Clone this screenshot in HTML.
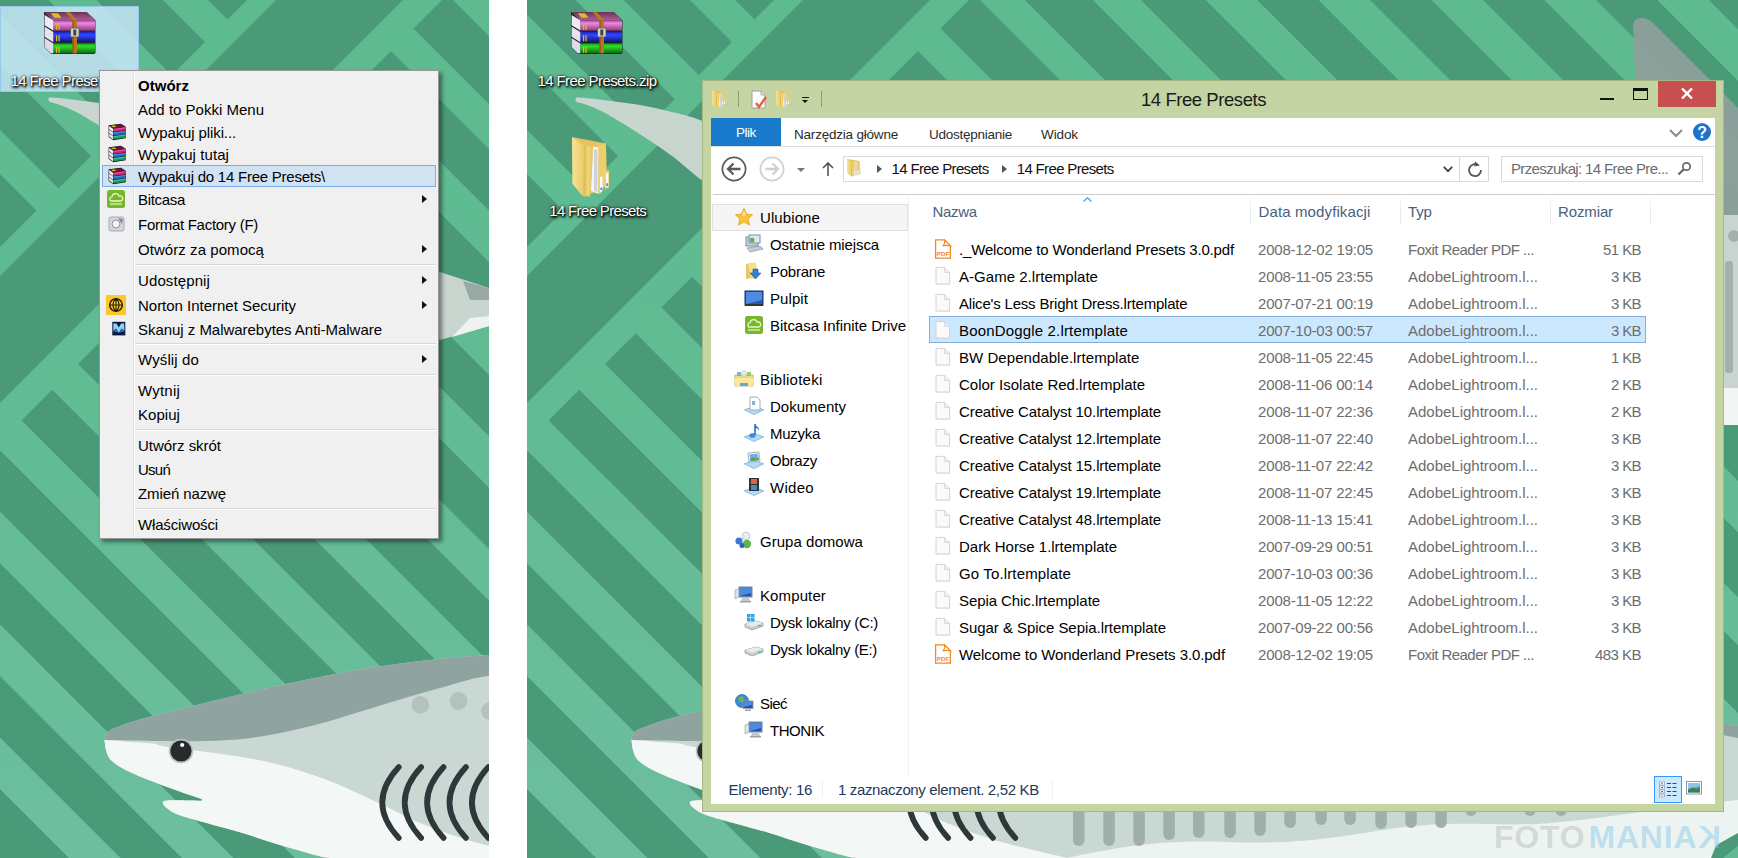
<!DOCTYPE html><html><head><meta charset="utf-8"><title>14 Free Presets</title><style>
*{box-sizing:border-box}
html,body{margin:0;padding:0}
body{width:1738px;height:858px;background:#fff;position:relative;overflow:hidden;font-family:"Liberation Sans", "DejaVu Sans", sans-serif;font-size:15px;color:#000}
.abs{position:absolute}
.panel{position:absolute;top:0;height:858px;overflow:hidden}
.t{position:absolute;white-space:pre;line-height:20px;height:20px}
.dl{position:absolute;white-space:pre;color:#fff;font-size:15px;line-height:20px;text-align:center;text-shadow:1px 1px 2px #000,0 0 3px #000,1px 2px 3px rgba(0,0,0,.8)}
#menu{position:absolute;left:99px;top:70px;width:340px;height:469px;background:#f0f0f0;border:1px solid #979797;box-shadow:3px 3px 4px rgba(0,0,0,.45)}
#menu .gut{position:absolute;left:33px;top:2px;bottom:2px;width:2px;border-left:1px solid #e0e0e0;border-right:1px solid #fff}
#menu .sep{position:absolute;left:35px;right:2px;height:2px;border-top:1px solid #d7d7d7;border-bottom:1px solid #fff}
#menu .mi{position:absolute;left:38px;white-space:pre;line-height:20px;height:20px}
#menu .arr{position:absolute;left:322.300px;width:0;height:0;border-left:5px solid #111;border-top:4.200px solid transparent;border-bottom:4.200px solid transparent}
#win{position:absolute;left:175px;top:80px;width:1022px;height:732px;background:#c4d5a3;border:1px solid #a5b884}
#client{position:absolute;left:8px;top:37px;width:1004px;height:685px;background:#fff}
.navi{color:#000}
.hd{color:#4c607a}
.gr{color:#6d6d6d}
</style></head><body>
<svg width="0" height="0" style="position:absolute"><defs><g id="wall"><rect x="0" y="0" width="1211" height="858" fill="#4a9a79"/><linearGradient id="lg" gradientUnits="userSpaceOnUse" x1="0" y1="0" x2="0" y2="858"><stop offset="0" stop-color="#5dbb8f"/><stop offset=".45" stop-color="#61bb93"/><stop offset="1" stop-color="#6cbe9f"/></linearGradient><g fill="url(#lg)"><polygon points="-174.5,614.5 -148.75,588.75 781.25,1518.75 755.5,1544.5"/><polygon points="-118.05,558.05 -92.3,532.3 837.7,1462.3 811.95,1488.05"/><polygon points="-61.6,501.6 -35.85,475.85 894.15,1405.85 868.4,1431.6"/><polygon points="-5.15,445.15 20.6,419.4 950.6,1349.4 924.85,1375.15"/><polygon points="51.3,388.7 77.05,362.95 1007.05,1292.95 981.3,1318.7"/><polygon points="107.75,332.25 133.5,306.5 1063.5,1236.5 1037.75,1262.25"/><polygon points="164.2,275.8 189.95,250.05 1119.95,1180.05 1094.2,1205.8"/><polygon points="220.65,219.35 246.4,193.6 1176.4,1123.6 1150.65,1149.35"/><polygon points="277.1,162.9 302.85,137.15 1232.85,1067.15 1207.1,1092.9"/><polygon points="333.55,106.45 359.3,80.7 1289.3,1010.7 1263.55,1036.45"/><polygon points="390,50 412.5,27.5 1342.5,957.5 1320,980"/><polygon points="446.45,-6.45 468.95,-28.95 1398.95,901.05 1376.45,923.55"/><polygon points="502.9,-62.9 526.9,-86.9 1456.9,843.1 1432.9,867.1"/><polygon points="559.35,-119.35 585.1,-145.1 1515.1,784.9 1489.35,810.65"/><polygon points="615.8,-175.8 641.55,-201.55 1571.55,728.45 1545.8,754.2"/><polygon points="672.25,-232.25 698,-258 1628,672 1602.25,697.75"/><polygon points="728.7,-288.7 754.45,-314.45 1684.45,615.55 1658.7,641.3"/><polygon points="785.15,-345.15 810.9,-370.9 1740.9,559.1 1715.15,584.85"/><polygon points="841.6,-401.6 867.35,-427.35 1797.35,502.65 1771.6,528.4"/><polygon points="-98.5,501.5 501.5,-98.5 521,-79 -79,521"/><polygon points="-76.5,323.5 323.5,-76.5 338,-62 -62,338"/><polygon points="-42,132 -20,110 60,190 38,212"/><polygon points="-37.5,27.5 -12.25,2.25 117.75,132.25 92.5,157.5"/><polygon points="39.25,-9.25 63.25,-33.25 173.25,76.75 149.25,100.75"/><polygon points="141.5,-21.5 164,-44 229,21 206.5,43.5"/></g><path fill="#cbd7d1" fill-opacity=".97" d="M48.5,99.5 C49.1,99.2 46.8,97.4 52.0,97.6 C57.2,97.8 69.4,99.2 80.0,100.5 C90.6,101.8 104.8,103.6 115.6,105.5 C126.4,107.4 134.9,109.4 145.0,112.0 C155.1,114.6 158.5,114.7 176.0,121.0 C193.5,127.3 222.7,136.0 250.0,150.0 C277.3,164.0 308.3,184.7 340.0,205.0 C371.7,225.3 423.3,260.8 440.0,272.0 L489,288 L489,326 L440,340  C423.3,331.7 371.7,307.5 340.0,290.0 C308.3,272.5 277.3,253.2 250.0,235.0 C222.7,216.8 193.5,194.2 176.0,181.0 C158.5,167.8 155.1,163.5 145.0,156.0 C134.9,148.5 126.4,143.0 115.6,136.0 C104.8,129.0 89.3,119.2 80.0,114.0 C70.7,108.8 65.0,107.0 60.0,105.0 C55.0,103.0 51.9,102.9 50.0,102.0 C48.1,101.1 48.8,99.9 48.5,99.5 Z"/><path fill="#98a8a4" d="M463,281 L489,288 L489,300 L470,300Z"/><path fill="#eef3f1" d="M452,337 L470,318 L489,316 L489,326 Z"/><path fill="#8d9f9b" fill-opacity=".95" d="M1106,24 Q1108,17 1116,18 Q1122,19 1126,23 L1211,108 L1211,215 L1110,215 C1112,150 1108,80 1106,24Z"/><rect x="1190" y="215" width="30" height="173" fill="#c9d4cf"/><rect x="1198" y="261" width="8" height="112" rx="3" fill="#a3b1ac"/><circle cx="1207" cy="236" r="6" fill="#a3b1ac"/><rect x="1190" y="388" width="30" height="37" fill="#f1f5f4"/><path fill="#c9d8d2" d="M104.5,740.0 C104.8,739.0 104.8,735.8 106.0,734.0 C107.2,732.2 109.3,730.8 111.5,729.5 C113.7,728.2 114.3,728.2 119.4,726.4 C124.5,724.6 133.0,721.4 142.3,718.8 C151.6,716.1 163.2,713.5 175.3,710.5 C187.4,707.5 199.6,704.2 215.0,700.5 C230.4,696.8 250.5,691.9 268.0,688.0 C285.5,684.1 303.1,680.3 320.0,677.0 C336.9,673.7 351.2,670.8 369.5,668.0 C387.8,665.2 409.9,662.2 430.0,660.0 C450.1,657.8 461.7,656.8 490.0,655.0 C518.3,653.2 556.7,649.7 600.0,649.0 C643.3,648.3 700.0,648.0 750.0,651.0 C800.0,654.0 850.0,659.8 900.0,667.0 C950.0,674.2 998.2,684.2 1050.0,694.0 C1101.8,703.8 1184.2,720.7 1211.0,726.0 L1211,858 L330,858  C328.1,857.7 327.0,858.2 318.7,856.0 C310.4,853.8 292.7,848.8 280.0,845.0 C267.3,841.2 254.2,836.5 242.5,833.0 C230.8,829.5 220.6,827.0 210.0,824.0 C199.4,821.0 186.0,817.5 179.0,815.0 C172.0,812.5 170.7,810.9 168.0,809.0 C165.3,807.1 163.0,804.9 163.0,803.5 C163.0,802.1 161.5,801.0 168.0,800.5 C174.5,800.0 196.2,800.8 201.8,800.8 L201.8,799  C196.5,797.2 180.1,791.7 170.0,788.0 C159.9,784.3 149.0,780.3 141.0,777.0 C133.0,773.7 127.1,770.9 122.0,768.0 C116.9,765.1 113.0,762.4 110.3,759.4 C107.6,756.4 107.0,753.2 106.0,750.0 C105.0,746.8 104.8,741.7 104.5,740.0 Z"/><path fill="#8fa3a0" d="M104.5,740.0 C104.8,739.0 104.8,735.8 106.0,734.0 C107.2,732.2 109.3,730.8 111.5,729.5 C113.7,728.2 114.3,728.2 119.4,726.4 C124.5,724.6 133.0,721.4 142.3,718.8 C151.6,716.1 163.2,713.5 175.3,710.5 C187.4,707.5 199.6,704.2 215.0,700.5 C230.4,696.8 250.5,691.9 268.0,688.0 C285.5,684.1 303.1,680.3 320.0,677.0 C336.9,673.7 351.2,670.8 369.5,668.0 C387.8,665.2 409.9,662.2 430.0,660.0 C450.1,657.8 461.7,656.8 490.0,655.0 C518.3,653.2 556.7,649.7 600.0,649.0 C643.3,648.3 700.0,648.0 750.0,651.0 C800.0,654.0 850.0,659.8 900.0,667.0 C950.0,674.2 998.2,684.2 1050.0,694.0 C1101.8,703.8 1184.2,720.7 1211.0,726.0 L1211,738  C1184.2,732.7 1101.8,715.7 1050.0,706.0 C998.2,696.3 950.0,687.0 900.0,680.0 C850.0,673.0 800.0,667.0 750.0,664.0 C700.0,661.0 643.3,660.1 600.0,662.0 C556.7,663.9 516.7,671.3 490.0,675.6 C463.3,679.9 455.8,683.8 440.0,688.0 C424.2,692.2 409.0,696.8 395.0,701.0 C381.0,705.2 368.7,709.2 356.0,713.0 C343.3,716.8 331.4,720.7 318.7,724.0 C306.0,727.3 292.7,730.5 280.0,733.0 C267.3,735.5 255.0,737.7 242.5,739.0 C230.0,740.3 218.8,740.7 205.0,741.0 C191.2,741.3 176.8,741.2 160.0,741.0 C143.2,740.8 113.8,740.2 104.5,740.0 Z"/><path fill="#f3f7f6" d="M104.5,740.0 C104.8,741.7 105.0,746.8 106.0,750.0 C107.0,753.2 107.6,756.4 110.3,759.4 C113.0,762.4 116.9,765.1 122.0,768.0 C127.1,770.9 133.0,773.7 141.0,777.0 C149.0,780.3 159.9,784.3 170.0,788.0 C180.1,791.7 196.5,797.2 201.8,799.0 L201.8,800.8  C196.2,800.8 174.5,800.0 168.0,800.5 C161.5,801.0 163.0,802.1 163.0,803.5 C163.0,804.9 165.3,807.1 168.0,809.0 C170.7,810.9 172.0,812.5 179.0,815.0 C186.0,817.5 199.4,821.0 210.0,824.0 C220.6,827.0 230.8,829.5 242.5,833.0 C254.2,836.5 267.3,841.2 280.0,845.0 C292.7,848.8 310.4,853.8 318.7,856.0 C327.0,858.2 328.1,857.7 330.0,858.0 L540,858  C528.5,855.2 491.0,846.8 471.0,841.0 C451.0,835.2 434.7,829.0 420.0,823.0 C405.3,817.0 395.7,811.0 383.0,805.0 C370.3,799.0 356.2,792.2 344.0,787.0 C331.8,781.8 322.7,778.2 310.0,774.0 C297.3,769.8 283.8,765.5 268.0,762.0 C252.2,758.5 232.0,755.5 215.0,753.0 C198.0,750.5 176.4,748.3 166.0,746.7 C155.6,745.1 159.0,744.4 152.5,743.6 C146.0,742.8 133.8,742.2 127.0,741.7 C120.2,741.2 114.5,740.8 112.0,740.6 L104.5,740 Z"/><path fill="#edf3f1" d="M540,858 C600,845 640,840 700,842 C780,845 820,835 870,828 C930,820 960,826 1010,824 C1070,820 1100,812 1211,800 L1211,858Z"/><circle cx="181" cy="751" r="12.3" fill="#b7c6c2"/><circle cx="181" cy="751" r="10.6" fill="#272b2c"/><circle cx="182.200" cy="745" r="2.100" fill="#fff"/><path d="M398.8,767 q-33,35.500 0,71" fill="none" stroke="#2e383a" stroke-width="5.600" stroke-linecap="round"/><path d="M421.2,767 q-33,35.500 0,71" fill="none" stroke="#2e383a" stroke-width="5.600" stroke-linecap="round"/><path d="M443.6,767 q-33,35.500 0,71" fill="none" stroke="#2e383a" stroke-width="5.600" stroke-linecap="round"/><path d="M466,767 q-33,35.500 0,71" fill="none" stroke="#2e383a" stroke-width="5.600" stroke-linecap="round"/><path d="M488.4,767 q-33,35.500 0,71" fill="none" stroke="#2e383a" stroke-width="5.600" stroke-linecap="round"/><circle cx="420.4" cy="704.8" r="8.900" fill="#b3c2bc"/><circle cx="458.5" cy="701" r="8.900" fill="#b3c2bc"/><circle cx="490" cy="711" r="8.900" fill="#b3c2bc"/><rect x="546" y="700" width="11.500" height="146" rx="5.700" fill="#9fb0aa"/><rect x="576.3" y="700" width="11.500" height="146" rx="5.700" fill="#9fb0aa"/><rect x="606.3" y="700" width="11.500" height="146" rx="5.700" fill="#9fb0aa"/><rect x="636.3" y="700" width="11.500" height="140" rx="5.700" fill="#9fb0aa"/><rect x="666" y="700" width="11.500" height="138" rx="5.700" fill="#9fb0aa"/><rect x="697.3" y="700" width="11.500" height="138" rx="5.700" fill="#9fb0aa"/><rect x="727.3" y="700" width="11.500" height="136" rx="5.700" fill="#9fb0aa"/><rect x="757.3" y="700" width="11.500" height="128" rx="5.700" fill="#9fb0aa"/><rect x="788.3" y="700" width="11.500" height="125" rx="5.700" fill="#9fb0aa"/><rect x="817.3" y="700" width="11.500" height="125" rx="5.700" fill="#9fb0aa"/><rect x="848.3" y="700" width="11.500" height="129" rx="5.700" fill="#9fb0aa"/><rect x="878.3" y="700" width="11.500" height="128" rx="5.700" fill="#9fb0aa"/><rect x="908.3" y="700" width="11.500" height="128" rx="5.700" fill="#9fb0aa"/><rect x="938.3" y="700" width="11.500" height="116" rx="5.700" fill="#9fb0aa"/><rect x="968.3" y="700" width="11.500" height="112" rx="5.700" fill="#9fb0aa"/><rect x="997.3" y="700" width="11.500" height="116" rx="5.700" fill="#9fb0aa"/><rect x="1028.3" y="700" width="11.500" height="116" rx="5.700" fill="#9fb0aa"/><rect x="1058.3" y="700" width="11.500" height="112" rx="5.700" fill="#9fb0aa"/><path fill="#4a9a79" d="M1184,858 L1188,848 Q1189,845 1193,843 L1211,833 L1211,858Z"/><path fill="#64b995" d="M1196,858 L1211,846 L1211,858Z"/></g>
<linearGradient id="gm" x1="0" y1="0" x2="0" y2="1"><stop offset="0" stop-color="#b0509c"/><stop offset=".3" stop-color="#ee86e0"/><stop offset="1" stop-color="#8e3a7c"/></linearGradient>
<linearGradient id="gb" x1="0" y1="0" x2="0" y2="1"><stop offset="0" stop-color="#1a22b8"/><stop offset=".3" stop-color="#3448ff"/><stop offset="1" stop-color="#0c1478"/></linearGradient>
<linearGradient id="gg" x1="0" y1="0" x2="0" y2="1"><stop offset="0" stop-color="#12a012"/><stop offset=".3" stop-color="#2edc2e"/><stop offset="1" stop-color="#0c6a10"/></linearGradient>
<linearGradient id="gt" x1="0" y1="0" x2="0" y2="1"><stop offset="0" stop-color="#6a3452"/><stop offset="1" stop-color="#b05a9c"/></linearGradient>
<g id="rar">
<path d="M0,0 L42.600,0 L51.500,8.300 L51.500,41 L50,42 L7,42 L0.300,35 Z" fill="#15121a" opacity=".88"/>
<path d="M0,0 L42.600,0 L51,8.300 L9.300,8.300 Z" fill="url(#gt)"/>
<path d="M6.700,1.300 L14,1.300 L17.500,5.800 L10.500,5.800 Z" fill="#d8c020"/>
<path d="M21.500,0.300 L26,0.300 L33,8.300 L28.500,8.300 Z" fill="#b47a1c"/>
<rect x="9.300" y="8.300" width="41.700" height="10.300" fill="url(#gm)"/>
<rect x="9.300" y="19.900" width="41.700" height="10.300" fill="url(#gb)"/>
<rect x="9.300" y="31.400" width="41.700" height="9.800" fill="url(#gg)"/>
<path d="M0.600,3 L9.300,8.300 L9.300,18.600 L0.600,13.300 Z" fill="#eeeaf6"/>
<path d="M0.600,14.500 L9.300,19.900 L9.300,30.200 L0.600,24.800 Z" fill="#e6e2f0"/>
<path d="M0.600,26 L9.300,31.400 L9.300,41.200 L6.700,41.200 L0.600,35 Z" fill="#dedaea"/>
<g fill="#d8b820"><rect x="11.900" y="11.800" width="1.300" height="6"/><rect x="14.400" y="11.800" width="1.300" height="6"/><rect x="11.900" y="23.400" width="1.300" height="6"/><rect x="14.400" y="23.400" width="1.300" height="6"/><rect x="11.900" y="34.900" width="1.300" height="6"/><rect x="14.400" y="34.900" width="1.300" height="6"/></g>
<rect x="28.500" y="8.300" width="4.500" height="33" fill="#b8761a"/><rect x="28.500" y="8.300" width="1.200" height="33" fill="#8a5410"/>
<rect x="26.600" y="16" width="8.400" height="9" rx="1" fill="#d4d4d4" stroke="#555" stroke-width=".8"/><rect x="29.300" y="17.500" width="3" height="6" fill="#444"/>
</g>
<g id="rars">
<path d="M2.600,3.300 L15,1.700 L19.700,4.800 L19.700,16.300 L7.300,18.300 L2.600,15 Z" fill="#1a1418"/>
<path d="M3.100,3.600 L15,2.200 L19.200,5 L7.300,6.700 Z" fill="#6c1438"/><path d="M5,3.800 L8.500,3.400 L10.500,4.700 L7,5.200 Z" fill="#d8c020"/>
<path d="M7.300,6.900 L19.200,5.200 L19.200,8.300 L7.300,10 Z" fill="#cc2474"/><path d="M7.300,6.900 L19.200,5.200 L19.200,6.300 L7.300,8 Z" fill="#e85aa6"/>
<path d="M3.100,3.900 L7,6.800 L7,10 L3.100,7.100 Z" fill="#f4f2f6"/>
<path d="M7.300,10.600 L19.200,8.900 L19.200,12 L7.300,13.700 Z" fill="#2264c4"/><path d="M7.300,10.600 L19.200,8.900 L19.200,10 L7.300,11.700 Z" fill="#4a90e6"/>
<path d="M3.100,7.600 L7,10.500 L7,13.700 L3.100,10.800 Z" fill="#eceaf0"/>
<path d="M7.300,14.300 L19.200,12.600 L19.200,15.800 L7.300,17.600 Z" fill="#1a9858"/><path d="M7.300,14.300 L19.200,12.600 L19.200,13.700 L7.300,15.400 Z" fill="#3cc488"/>
<path d="M3.100,11.300 L7,14.200 L7,17.500 L3.100,14.600 Z" fill="#e4e2ea"/>
</g>
<g id="bitc"><rect x="1" y="1" width="18" height="18" rx="2.5" fill="#76b82a"/><path d="M5 12a2.3 2.3 0 0 1 1-4.3a3.6 3.6 0 0 1 7-.6a2.6 2.6 0 0 1 2 4.9z" fill="none" stroke="#e8f5d0" stroke-width="1.3"/><path d="M4 15h12" stroke="#e8f5d0" stroke-width="1.2"/></g>
<g id="ff"><rect x="3" y="3" width="15" height="14" rx="2" fill="#d4d6da" stroke="#a9acb3"/><circle cx="10" cy="10" r="4" fill="#f4f4f6" stroke="#8e95a3"/><path d="M12 4l5 1l-1 5z" fill="#7d8aa5"/></g>
<g id="norton"><rect x="0" y="0" width="20" height="20" fill="#fdc82f"/><circle cx="10" cy="10" r="6.3" fill="none" stroke="#2b2200" stroke-width="1.5"/><path d="M3.7 10h12.6M10 3.7v12.6M10 3.7c-4 3-4 9.6 0 12.6M10 3.7c4 3 4 9.6 0 12.6" fill="none" stroke="#2b2200" stroke-width="1.1"/></g>
<g id="mbam"><rect x="6.300" y="2.800" width="13" height="13.600" fill="#0c1a45"/><path d="M7.300,4.500 L10.500,4.500 L12.800,8.500 L15.100,4.500 L18.300,4.500 L18.300,12 L15.500,9.500 L12.800,14 L10.100,9.500 L7.300,12 Z" fill="#8fd0f5"/><path d="M7.300,12.500l3-2.500l1.500,3.500zM18.300,12.500l-3-2.500l-1.500,3.500z" fill="#2b6fd0"/></g>
<g id="tfolder"><path d="M1 3l7-1.5l1 15.5l-8 1z" fill="#e8c864"/><path d="M3 2.5l9-1.5l3 16l-8 2z" fill="#f6e08c"/><path d="M8 4l6-1l2 14l-8 2z" fill="#efd377"/><path d="M9 5l6 0l1 13l-7 1z" fill="#f9e9a4"/></g>
<g id="tdoc"><path d="M2 1h9l4 4v13h-13z" fill="#fdfdfd" stroke="#9a9a9a" stroke-width=".9"/><path d="M11 1v4h4" fill="#e8e8e8" stroke="#9a9a9a" stroke-width=".8"/><path d="M6 13l3 4l7-10" fill="none" stroke="#e8603c" stroke-width="2.4"/></g>
<g id="back"><circle cx="13" cy="13" r="11.6" fill="#fff" stroke="#5a5a5a" stroke-width="1.7"/><path d="M19.5 13h-12M12.5 7.5l-5.5 5.5l5.5 5.5" fill="none" stroke="#5a5a5a" stroke-width="2.3"/></g>
<g id="fwd"><circle cx="13" cy="13" r="11.6" fill="#fff" stroke="#cfcfcf" stroke-width="1.7"/><path d="M6.5 13h12M13.5 7.5l5.5 5.5l-5.5 5.5" fill="none" stroke="#cfcfcf" stroke-width="2.3"/></g>
<g id="star"><path d="M10 1.5l2.6 5.6l6 .7l-4.5 4.1l1.3 6.1l-5.4-3.1l-5.4 3.1l1.3-6.1l-4.5-4.1l6-.7z" fill="#f9c537" stroke="#e39a17" stroke-width=".8"/><path d="M10 3.5l1.8 4.3l-3.8 1z" fill="#fdeaa0"/></g>
<g id="recent"><rect x="2" y="3" width="12" height="9" fill="#b8d4ec" stroke="#7a8fa5"/><rect x="5" y="1" width="11" height="8" fill="#dbeaf7" stroke="#7a8fa5"/><path d="M3 14l13-2l3 3l-13 3z" fill="#c6ccd2" stroke="#8d949b" stroke-width=".7"/><circle cx="8" cy="6" r="2.5" fill="#6fae4f"/></g>
<g id="dl"><path d="M2 3l6-1l1 15l-7 1z" fill="#e8c864"/><path d="M4 2.5l8-1l2 15l-7 2z" fill="#f6e08c"/><path d="M9 8h5v4h3l-5.5 6l-5.500-6h3z" fill="#2d7fd8" stroke="#1b5fb0" stroke-width=".6"/></g>
<g id="desk"><rect x="1" y="3" width="18" height="14" fill="#2a57b8" stroke="#1a2d66"/><path d="M2 4h16v8l-16 4z" fill="#4f8be0"/><rect x="1" y="16" width="18" height="2" fill="#333"/></g>
<g id="lib"><path d="M1 6h18v11h-18z" fill="#f3d774" stroke="#d1a93a" stroke-width=".8"/><path d="M3 3h4v4h-4z" fill="#6fb4e8"/><path d="M8 2h4v5h-4z" fill="#e9e9e9" stroke="#bbb" stroke-width=".5"/><path d="M13 3h4v4h-4z" fill="#8ccf6f"/><path d="M1 9h18v8h-18z" fill="#f9e79f"/><rect x="6" y="14" width="8" height="3" fill="#5fa8e0"/></g>
<g id="docs"><path d="M0.300 13.800l9.700-3.300l9.700 3.300l-9.700 4.700z" fill="#b5dcf5" stroke="#6fb0e0" stroke-width=".8"/><path d="M6 1h7l3 3v10h-10z" fill="#fff" stroke="#8c9bb0" stroke-width=".8"/><path d="M8 5h3v4h-3z" fill="#7eb4e6"/></g>
<g id="music"><path d="M0.300 13.800l9.700-3.300l9.700 3.300l-9.700 4.700z" fill="#b5dcf5" stroke="#6fb0e0" stroke-width=".8"/><path d="M11 1v11" stroke="#2a6fc4" stroke-width="1.6"/><path d="M11 1c1 3 5 3 4 7c0-2-2-3-4-3z" fill="#2a6fc4"/><ellipse cx="8.500" cy="12.500" rx="3.200" ry="2.300" fill="#3f8ae0"/></g>
<g id="pics"><path d="M0.300 13.800l9.700-3.300l9.700 3.300l-9.700 4.700z" fill="#b5dcf5" stroke="#6fb0e0" stroke-width=".8"/><path d="M4 3l11-1l1 9l-11 1z" fill="#fff" stroke="#8c9bb0" stroke-width=".8"/><path d="M5.500 4.200l8.500-.8l.7 6.500l-8.500.8z" fill="#6fb1e4"/><path d="M6 10l3-3l3 2l2.500-1.500l.2 2.700l-8.500.8z" fill="#5c9a46"/></g>
<g id="video"><path d="M0.300 13.800l9.700-3.300l9.700 3.300l-9.700 4.700z" fill="#b5dcf5" stroke="#6fb0e0" stroke-width=".8"/><rect x="5" y="1" width="10" height="13" fill="#333"/><rect x="7" y="2" width="6" height="5" fill="#d86a3c"/><rect x="7" y="8" width="6" height="5" fill="#4c86c6"/></g>
<g id="homegrp"><circle cx="5" cy="10" r="3.6" fill="#3f78d0"/><circle cx="12" cy="5" r="3.800" fill="#e9eef5" stroke="#9ab" stroke-width=".6"/><circle cx="13" cy="13" r="4.200" fill="#59b947"/><circle cx="8" cy="14.500" r="2.500" fill="#2f62b8"/></g>
<g id="comp"><rect x="5" y="2" width="13" height="10" fill="#2552b0" stroke="#8e99a8" stroke-width="1.2"/><path d="M6 3h11v5l-11 3z" fill="#4c8ae2"/><path d="M8 13h7l1 3h-9z" fill="#c4c9d0"/><path d="M1 5l4-1v8l-4 2z" fill="#dfe3e8" stroke="#8e99a8" stroke-width=".6"/><rect x="6" y="16" width="11" height="1.500" fill="#9aa3ad"/></g>
<g id="drvc"><path d="M1 12l11-3l7 2v3l-11 4l-7-3z" fill="#c9ced4" stroke="#8d949b" stroke-width=".7"/><path d="M1 12l11-3l7 2l-11 4z" fill="#e7eaee"/><rect x="3" y="2" width="3.500" height="3.500" fill="#2aa4e8"/><rect x="7" y="2" width="3.500" height="3.500" fill="#2aa4e8"/><rect x="3" y="6" width="3.500" height="3.500" fill="#2aa4e8"/><rect x="7" y="6" width="3.500" height="3.500" fill="#2aa4e8"/><rect x="14" y="13" width="3" height="1.200" fill="#4bc84b"/></g>
<g id="drve"><path d="M1 11l11-3l7 2v3l-11 4l-7-3z" fill="#c9ced4" stroke="#8d949b" stroke-width=".7"/><path d="M1 11l11-3l7 2l-11 4z" fill="#e7eaee"/><rect x="14" y="12.500" width="3" height="1.200" fill="#4bc84b"/></g>
<g id="net"><circle cx="8" cy="8" r="6.500" fill="#3b8ad6" stroke="#1f5ea8" stroke-width=".7"/><path d="M4 5c2-2 5-2 6 0c-1 2-1 4-3 4c-2 0-3-2-3-4z" fill="#5fbb4a"/><rect x="9" y="8" width="10" height="7.500" fill="#2552b0" stroke="#9aa3ad"/><path d="M10 9h8v3l-8 2z" fill="#4c8ae2"/><rect x="11" y="16.500" width="6" height="1.500" fill="#9aa3ad"/></g>
<g id="pdf"><path d="M1.600,0.800h8.800l6,6v12.400h-14.800z" fill="#fff" stroke="#f08a24" stroke-width="1.300"/><path d="M10.400,0.800c.8,2.800 .2,4.600 -1.600,6.200c2.600-1 5-.8 7.600-.2z" fill="#fff" stroke="#f08a24" stroke-width="1.100"/><text x="2.800" y="16.600" font-family="Liberation Sans, sans-serif" font-size="6.200" font-weight="bold" fill="#f08a24">PDF</text></g>
<g id="file"><path d="M2.600,1.900h8.400l5,5v11.500h-13.400z" fill="#dcdcdc" opacity=".6"/><path d="M2,1.400h8.600l5,5v11.600h-13.600z" fill="#fafafa" stroke="#cfcfcf" stroke-width=".9"/><path d="M10.600,1.400v5h5" fill="#f0f0f0" stroke="#cfcfcf" stroke-width=".8"/></g>
<g id="vdet"><g fill="#fff" stroke="#8a97a8" stroke-width=".7"><rect x=".5" y="1" width="5" height="3"/><rect x=".5" y="5" width="5" height="3"/><rect x=".5" y="9" width="5" height="3"/><rect x=".5" y="13" width="5" height="3"/></g><rect x="2" y="2" width="2" height="1" fill="#7ab648"/><rect x="2" y="6" width="2" height="1" fill="#e8413a"/><rect x="2" y="10" width="2" height="1" fill="#3c8ad8"/><rect x="2" y="14" width="2" height="1" fill="#e0b020"/><path d="M8 2.500h4M13.500 2.500h4M8 6.500h4M13.500 6.500h4M8 10.500h4M13.500 10.500h4M8 14.500h4M13.500 14.500h4" stroke="#3c4a5c" stroke-width="1.200"/></g>
<g id="vthumb"><rect x=".5" y=".5" width="15" height="12.500" fill="#fff" stroke="#8a97a8"/><rect x="2" y="2" width="12" height="9.500" fill="#5aa6e6"/><path d="M2 9l4-4l4 3l4-2v5.500h-12z" fill="#3f7f4a"/><path d="M2 2h12v3l-12 3z" fill="#a6d2f5" opacity=".7"/></g>
<linearGradient id="gf1" x1="0" y1="0" x2="1" y2="0"><stop offset="0" stop-color="#f6e394"/><stop offset="1" stop-color="#e9cc68"/></linearGradient>
<linearGradient id="gf2" x1="0" y1="0" x2="1" y2="0"><stop offset="0" stop-color="#d9b64e"/><stop offset=".5" stop-color="#f0d67c"/><stop offset="1" stop-color="#e6c862"/></linearGradient>
<g id="bigfolder">
<path d="M0,0 L34,6.600 L34.500,34 L30,52 L12,60 Z" fill="#e5c45c"/>
<path d="M26,8 L34,6.600 L34.500,48 L29,53 Z" fill="#ecd070"/>
<path d="M21,9.600 L26.500,10.500 L26.500,57 L19,54 Z" fill="#f4f4f8"/><path d="M22,12 L25.500,12.600 L25.500,55 L22,54 Z" fill="#c4c8d6" opacity=".75"/>
<path d="M26.500,12 L28.500,13 L29.500,40 L29,56 L26.500,57 Z" fill="#e9cf72"/>
<path d="M11.800,8.700 L20.500,9.200 L20,36 L17.500,59.900 L11.400,57 Z" fill="url(#gf2)"/>
<path d="M0,0 L11.800,8.700 L11.400,59.900 L0.400,46.800 Z" fill="url(#gf1)"/>
<path d="M28,40 L30.500,39.500 L30.500,54 L28,55.500 Z" fill="#fff"/><rect x="28.300" y="50.500" width="1.900" height="2.600" fill="#4f8fe8"/>
<path d="M31.500,34 L37,33.600 L37,50.500 L33,52 Z" fill="#f0d470"/><path d="M34,36.500 L36.300,36.300 L36.300,49.500 L34,50.300 Z" fill="#fff"/><rect x="34.200" y="46.200" width="2" height="2.800" fill="#4f8fe8"/>
</g>
</defs></svg>
<div class="panel" style="left:0;width:489px"><svg class="abs" style="left:0;top:0" width="1211" height="858" viewBox="0 0 1211 858"><use href="#wall"/></svg><div class="abs" style="left:0;top:5.500px;width:139px;height:86px;background:rgba(206,234,255,.8);border:1px solid rgba(150,200,238,.95)"></div><svg class="abs" style="left:44px;top:12px" width="52" height="42" viewBox="0 0 52 42"><use href="#rar"/></svg><div class="dl" style="left:10.400px;top:71px;letter-spacing:-0.582px">14 Free Presets.zip</div><div id="menu"><div class="gut"></div><div class="abs" style="left:2px;top:94px;width:334px;height:22px;background:#d1e2f2;border:1px solid #78aee5"></div><div class="mi" style="top:4.9px;letter-spacing:0.026px;font-weight:bold;">Otwórz</div><div class="mi" style="top:28.7px;letter-spacing:0.006px;">Add to Pokki Menu</div><div class="mi" style="top:51.5px;letter-spacing:-0.119px;">Wypakuj pliki...</div><svg class="abs" style="left:6px;top:51px" width="20" height="20" viewBox="0 0 20 20"><use href="#rars"/></svg><div class="mi" style="top:73.5px;letter-spacing:0.084px;">Wypakuj tutaj</div><svg class="abs" style="left:6px;top:73px" width="20" height="20" viewBox="0 0 20 20"><use href="#rars"/></svg><div class="mi" style="top:95.5px;letter-spacing:-0.233px;">Wypakuj do 14 Free Presets\</div><svg class="abs" style="left:6px;top:95px" width="20" height="20" viewBox="0 0 20 20"><use href="#rars"/></svg><div class="mi" style="top:118.5px;letter-spacing:-0.315px;">Bitcasa</div><div class="arr" style="top:124px"></div><svg class="abs" style="left:6px;top:118px" width="20" height="20" viewBox="0 0 20 20"><use href="#bitc"/></svg><div class="mi" style="top:143.5px;letter-spacing:-0.279px;">Format Factory (F)</div><svg class="abs" style="left:6px;top:143px" width="20" height="20" viewBox="0 0 20 20"><use href="#ff"/></svg><div class="mi" style="top:168.5px;letter-spacing:0.06px;">Otwórz za pomocą</div><div class="arr" style="top:174px"></div><div class="mi" style="top:199.5px;letter-spacing:0.111px;">Udostępnij</div><div class="arr" style="top:205px"></div><div class="mi" style="top:224.5px;letter-spacing:-0.018px;">Norton Internet Security</div><div class="arr" style="top:230px"></div><svg class="abs" style="left:6px;top:224px" width="20" height="20" viewBox="0 0 20 20"><use href="#norton"/></svg><div class="mi" style="top:248.5px;letter-spacing:-0.033px;">Skanuj z Malwarebytes Anti-Malware</div><svg class="abs" style="left:6px;top:248px" width="20" height="20" viewBox="0 0 20 20"><use href="#mbam"/></svg><div class="mi" style="top:278.5px;letter-spacing:0.123px;">Wyślij do</div><div class="arr" style="top:284px"></div><div class="mi" style="top:309.5px;letter-spacing:0.216px;">Wytnij</div><div class="mi" style="top:333.5px;letter-spacing:0.049px;">Kopiuj</div><div class="mi" style="top:364.5px;letter-spacing:-0.029px;">Utwórz skrót</div><div class="mi" style="top:388.5px;letter-spacing:-0.758px;">Usuń</div><div class="mi" style="top:412.5px;letter-spacing:-0.109px;">Zmień nazwę</div><div class="mi" style="top:443.5px;letter-spacing:-0.153px;">Właściwości</div><div class="sep" style="top:193px"></div><div class="sep" style="top:272px"></div><div class="sep" style="top:303px"></div><div class="sep" style="top:358px"></div><div class="sep" style="top:437px"></div></div></div>
<div class="panel" style="left:527px;width:1211px"><svg class="abs" style="left:0;top:0" width="1211" height="858" viewBox="0 0 1211 858"><use href="#wall"/></svg><svg class="abs" style="left:44px;top:12px" width="52" height="42" viewBox="0 0 52 42"><use href="#rar"/></svg><div class="dl" style="left:10.400px;top:71px;letter-spacing:-0.582px">14 Free Presets.zip</div><svg class="abs" style="left:45px;top:137px" width="38" height="60" viewBox="0 0 38 60"><use href="#bigfolder"/></svg><div class="dl" style="left:22.200px;top:201px;letter-spacing:-0.648px">14 Free Presets</div><div class="abs" style="left:967px;top:820.800px;font-weight:bold;font-size:32px;line-height:32px;letter-spacing:.8px;white-space:pre"><span style="color:rgba(150,165,162,.33)">FOTO</span><span style="color:rgba(120,195,232,.42);margin-left:3px">MANIA</span><span style="color:rgba(120,195,232,.42);display:inline-block;transform:scaleX(-1)">K</span></div><div id="win"><div class="abs" style="left:8px;top:37px;width:1004px;height:686px;background:#fff"></div><svg class="abs" style="left:9px;top:8.8px" width="13.5" height="18" viewBox="0 0 38 60" preserveAspectRatio="none"><use href="#bigfolder"/></svg><div class="abs" style="left:35px;top:10px;width:1px;height:16px;background:#8f9c78"></div><svg class="abs" style="left:47px;top:8.5px" width="18" height="20" viewBox="0 0 18 20"><use href="#tdoc"/></svg><svg class="abs" style="left:73.2px;top:8.8px" width="13.5" height="18" viewBox="0 0 38 60" preserveAspectRatio="none"><use href="#bigfolder"/></svg><div class="abs" style="left:98.7px;top:15.8px;width:7.4px;height:1.4px;background:#111"></div><div class="abs" style="left:99px;top:18.5px;width:0;height:0;border-top:3.800px solid #111;border-left:3.400px solid transparent;border-right:3.400px solid transparent"></div><div class="abs" style="left:117.8px;top:10px;width:1px;height:16px;background:#8f9c78"></div><div class="t " style="left:438px;top:8.5px;font-size:18.5px;letter-spacing:-0.442px;color:#1a1a1a">14 Free Presets</div><div class="abs" style="left:897px;top:16.8px;width:14px;height:2.3px;background:#111"></div><div class="abs" style="left:930px;top:7px;width:15px;height:12px;border:1px solid #111;border-top:3px solid #111"></div><div class="abs" style="left:955px;top:0px;width:58px;height:26px;background:#c84f4f"></div><svg class="abs" style="left:978px;top:7px" width="12" height="11" viewBox="0 0 12 11"><path d="M1 0.5L11 10.5M11 0.5L1 10.5" stroke="#fff" stroke-width="2.4"/></svg><div class="abs" style="left:8px;top:37px;width:70px;height:28px;background:#1979ca"></div><div class="t " style="left:33px;top:41.5px;font-size:13.5px;letter-spacing:-0.516px;color:#fff">Plik</div><div class="t " style="left:91px;top:43.5px;font-size:13.5px;letter-spacing:-0.207px;color:#2b2b2b">Narzędzia główne</div><div class="t " style="left:226px;top:43.5px;font-size:13.5px;letter-spacing:-0.256px;color:#2b2b2b">Udostępnianie</div><div class="t " style="left:338px;top:43.5px;font-size:13.5px;letter-spacing:-0.103px;color:#2b2b2b">Widok</div><div class="abs" style="left:8px;top:65px;width:1004px;height:1px;background:#dadbdc"></div><svg class="abs" style="left:966px;top:48px" width="14" height="9" viewBox="0 0 14 9"><path d="M1 1L7 7L13 1" fill="none" stroke="#8a8a8a" stroke-width="2"/></svg><div class="abs" style="left:990px;top:42px;width:18.4px;height:18.4px;border-radius:50%;background:#1c72cc"></div><div class="t " style="left:994.3px;top:41.5px;color:#fff;font-weight:bold;font-size:16px">?</div><svg class="abs" style="left:18px;top:75px" width="26" height="26" viewBox="0 0 26 26"><use href="#back"/></svg><svg class="abs" style="left:56px;top:75px" width="26" height="26" viewBox="0 0 26 26"><use href="#fwd"/></svg><div class="abs" style="left:94px;top:87px;width:0;height:0;border-top:4px solid #777;border-left:4px solid transparent;border-right:4px solid transparent"></div><svg class="abs" style="left:118px;top:80px" width="14" height="16" viewBox="0 0 14 16"><path d="M7 15V2M2 7L7 2L12 7" fill="none" stroke="#555" stroke-width="1.6"/></svg><div class="abs" style="left:140px;top:75px;width:617px;height:26px;border:1px solid #d9d9d9;background:#fff"></div><div class="abs" style="left:757px;top:75px;width:29px;height:26px;border:1px solid #d9d9d9;border-left:none;background:#fff"></div><svg class="abs" style="left:144.3px;top:78px" width="14" height="17.5" viewBox="0 0 38 60" preserveAspectRatio="none"><use href="#bigfolder"/></svg><div class="abs" style="left:174px;top:84px;width:0;height:0;border-left:5px solid #555;border-top:4.5px solid transparent;border-bottom:4.5px solid transparent"></div><div class="t " style="left:188.5px;top:77.5px;letter-spacing:-0.648px;color:#111">14 Free Presets</div><div class="abs" style="left:299px;top:84px;width:0;height:0;border-left:5px solid #555;border-top:4.5px solid transparent;border-bottom:4.5px solid transparent"></div><div class="t " style="left:313.7px;top:77.5px;letter-spacing:-0.648px;color:#111">14 Free Presets</div><svg class="abs" style="left:740.4px;top:84.5px" width="10" height="7" viewBox="0 0 10 7"><path d="M0.800 0.800L5 5.200L9.200 0.800" fill="none" stroke="#444" stroke-width="1.900"/></svg><svg class="abs" style="left:764px;top:79px" width="16" height="18" viewBox="0 0 16 18"><path d="M11.5 5.2A6 6 0 1 0 14 10" fill="none" stroke="#555" stroke-width="1.8"/><path d="M8 1.2L12.6 5.4L7.4 6.6Z" fill="#555"/></svg><div class="abs" style="left:798px;top:75px;width:202px;height:26px;border:1px solid #d9d9d9;background:#fff"></div><div class="t gr" style="left:808px;top:77.8px;letter-spacing:-0.631px;">Przeszukaj: 14 Free Pre...</div><svg class="abs" style="left:974px;top:80px" width="15" height="15" viewBox="0 0 15 15"><circle cx="9.5" cy="5.5" r="3.7" fill="none" stroke="#666" stroke-width="1.7"/><path d="M6.8 8.2L1.5 13.5" stroke="#666" stroke-width="2.2"/></svg><div class="abs" style="left:10px;top:113px;width:1002px;height:1px;background:#cdcdcd"></div><div class="abs" style="left:205px;top:115px;width:1px;height:578px;background:#f0f0f0"></div><div class="abs" style="left:9px;top:123px;width:195.5px;height:27px;background:#f5f5f5;border:1px solid #e0e0e0"></div><div class="t navi" style="left:57px;top:126.5px;letter-spacing:0.098px;">Ulubione</div><svg class="abs" style="left:31px;top:126px" width="20" height="20" viewBox="0 0 20 20"><use href="#star"/></svg><div class="t navi" style="left:67px;top:153.5px;letter-spacing:-0.117px;">Ostatnie miejsca</div><svg class="abs" style="left:41px;top:153px" width="20" height="20" viewBox="0 0 20 20"><use href="#recent"/></svg><div class="t navi" style="left:67px;top:180.5px;letter-spacing:-0.246px;">Pobrane</div><svg class="abs" style="left:41px;top:180px" width="20" height="20" viewBox="0 0 20 20"><use href="#dl"/></svg><div class="t navi" style="left:67px;top:207.5px;letter-spacing:0.078px;">Pulpit</div><svg class="abs" style="left:41px;top:207px" width="20" height="20" viewBox="0 0 20 20"><use href="#desk"/></svg><div class="t navi" style="left:67px;top:234.5px;letter-spacing:-0.033px;">Bitcasa Infinite Drive</div><svg class="abs" style="left:41px;top:234px" width="20" height="20" viewBox="0 0 20 20"><use href="#bitc"/></svg><div class="t navi" style="left:57px;top:288.5px;letter-spacing:0.247px;">Biblioteki</div><svg class="abs" style="left:31px;top:288px" width="20" height="20" viewBox="0 0 20 20"><use href="#lib"/></svg><div class="t navi" style="left:67px;top:315.5px;letter-spacing:0.014px;">Dokumenty</div><svg class="abs" style="left:41px;top:315px" width="20" height="20" viewBox="0 0 20 20"><use href="#docs"/></svg><div class="t navi" style="left:67px;top:342.5px;letter-spacing:-0.281px;">Muzyka</div><svg class="abs" style="left:41px;top:342px" width="20" height="20" viewBox="0 0 20 20"><use href="#music"/></svg><div class="t navi" style="left:67px;top:369.5px;letter-spacing:-0.227px;">Obrazy</div><svg class="abs" style="left:41px;top:369px" width="20" height="20" viewBox="0 0 20 20"><use href="#pics"/></svg><div class="t navi" style="left:67px;top:396.5px;letter-spacing:0.294px;">Wideo</div><svg class="abs" style="left:41px;top:396px" width="20" height="20" viewBox="0 0 20 20"><use href="#video"/></svg><div class="t navi" style="left:57px;top:450.5px;letter-spacing:0.036px;">Grupa domowa</div><svg class="abs" style="left:31px;top:450px" width="20" height="20" viewBox="0 0 20 20"><use href="#homegrp"/></svg><div class="t navi" style="left:57px;top:504.5px;letter-spacing:0.119px;">Komputer</div><svg class="abs" style="left:31px;top:504px" width="20" height="20" viewBox="0 0 20 20"><use href="#comp"/></svg><div class="t navi" style="left:67px;top:531.5px;letter-spacing:-0.315px;">Dysk lokalny (C:)</div><svg class="abs" style="left:41px;top:531px" width="20" height="20" viewBox="0 0 20 20"><use href="#drvc"/></svg><div class="t navi" style="left:67px;top:558.5px;letter-spacing:-0.325px;">Dysk lokalny (E:)</div><svg class="abs" style="left:41px;top:558px" width="20" height="20" viewBox="0 0 20 20"><use href="#drve"/></svg><div class="t navi" style="left:57px;top:612.5px;letter-spacing:-0.547px;">Sieć</div><svg class="abs" style="left:31px;top:612px" width="20" height="20" viewBox="0 0 20 20"><use href="#net"/></svg><div class="t navi" style="left:67px;top:639.5px;letter-spacing:-0.445px;">THONIK</div><svg class="abs" style="left:41px;top:639px" width="20" height="20" viewBox="0 0 20 20"><use href="#comp"/></svg><div class="abs" style="left:547px;top:116px;width:1px;height:28px;background:linear-gradient(#fff,#e6ebf2 40%,#e6ebf2)"></div><div class="abs" style="left:697px;top:116px;width:1px;height:28px;background:linear-gradient(#fff,#e6ebf2 40%,#e6ebf2)"></div><div class="abs" style="left:847px;top:116px;width:1px;height:28px;background:linear-gradient(#fff,#e6ebf2 40%,#e6ebf2)"></div><div class="abs" style="left:947px;top:116px;width:1px;height:28px;background:linear-gradient(#fff,#e6ebf2 40%,#e6ebf2)"></div><div class="t hd" style="left:229.4px;top:120.5px;letter-spacing:-0.312px;">Nazwa</div><div class="t hd" style="left:555.5px;top:120.5px;letter-spacing:0.122px;">Data modyfikacji</div><div class="t hd" style="left:705px;top:120.5px;letter-spacing:-0.196px;">Typ</div><div class="t hd" style="left:855px;top:120.5px;letter-spacing:-0.121px;">Rozmiar</div><svg class="abs" style="left:380px;top:116px" width="9" height="5" viewBox="0 0 9 5"><path d="M0.5 4.5L4.5 0.8L8.5 4.5" fill="none" stroke="#5b9bd5" stroke-width="1.3"/></svg><div class="abs" style="left:226px;top:235.2px;width:717px;height:27.3px;background:#cce8ff;border:1px solid #84acdd"></div><svg class="abs" style="left:231px;top:158px" width="18" height="20" viewBox="0 0 18 20"><use href="#pdf"/></svg><div class="t " style="left:256px;top:158.5px;letter-spacing:-0.161px;">._Welcome to Wonderland Presets 3.0.pdf</div><div class="t gr" style="left:555px;top:158.5px;letter-spacing:-0.215px;">2008-12-02 19:05</div><div class="t gr" style="left:705px;top:158.5px;letter-spacing:-0.536px;">Foxit Reader PDF ...</div><div class="t gr" style="left:858px;top:158.5px;width:80px;text-align:right;letter-spacing:-0.575px">51 KB</div><svg class="abs" style="left:231px;top:185px" width="18" height="20" viewBox="0 0 18 20"><use href="#file"/></svg><div class="t " style="left:256px;top:185.5px;letter-spacing:0.032px;">A-Game 2.lrtemplate</div><div class="t gr" style="left:555px;top:185.5px;letter-spacing:-0.146px;">2008-11-05 23:55</div><div class="t gr" style="left:705px;top:185.5px;letter-spacing:-0.004px;">AdobeLightroom.l...</div><div class="t gr" style="left:858px;top:185.5px;width:80px;text-align:right;letter-spacing:-0.633px">3 KB</div><svg class="abs" style="left:231px;top:212px" width="18" height="20" viewBox="0 0 18 20"><use href="#file"/></svg><div class="t " style="left:256px;top:212.5px;letter-spacing:-0.193px;">Alice's Less Bright Dress.lrtemplate</div><div class="t gr" style="left:555px;top:212.5px;letter-spacing:-0.215px;">2007-07-21 00:19</div><div class="t gr" style="left:705px;top:212.5px;letter-spacing:-0.004px;">AdobeLightroom.l...</div><div class="t gr" style="left:858px;top:212.5px;width:80px;text-align:right;letter-spacing:-0.633px">3 KB</div><svg class="abs" style="left:231px;top:239px" width="18" height="20" viewBox="0 0 18 20"><use href="#file"/></svg><div class="t " style="left:256px;top:239.5px;letter-spacing:0.169px;">BoonDoggle 2.lrtemplate</div><div class="t gr" style="left:555px;top:239.5px;letter-spacing:-0.215px;">2007-10-03 00:57</div><div class="t gr" style="left:705px;top:239.5px;letter-spacing:-0.004px;">AdobeLightroom.l...</div><div class="t gr" style="left:858px;top:239.5px;width:80px;text-align:right;letter-spacing:-0.633px">3 KB</div><svg class="abs" style="left:231px;top:266px" width="18" height="20" viewBox="0 0 18 20"><use href="#file"/></svg><div class="t " style="left:256px;top:266.5px;letter-spacing:0.051px;">BW Dependable.lrtemplate</div><div class="t gr" style="left:555px;top:266.5px;letter-spacing:-0.146px;">2008-11-05 22:45</div><div class="t gr" style="left:705px;top:266.5px;letter-spacing:-0.004px;">AdobeLightroom.l...</div><div class="t gr" style="left:858px;top:266.5px;width:80px;text-align:right;letter-spacing:-0.633px">1 KB</div><svg class="abs" style="left:231px;top:293px" width="18" height="20" viewBox="0 0 18 20"><use href="#file"/></svg><div class="t " style="left:256px;top:293.5px;letter-spacing:0.003px;">Color Isolate Red.lrtemplate</div><div class="t gr" style="left:555px;top:293.5px;letter-spacing:-0.146px;">2008-11-06 00:14</div><div class="t gr" style="left:705px;top:293.5px;letter-spacing:-0.004px;">AdobeLightroom.l...</div><div class="t gr" style="left:858px;top:293.5px;width:80px;text-align:right;letter-spacing:-0.633px">2 KB</div><svg class="abs" style="left:231px;top:320px" width="18" height="20" viewBox="0 0 18 20"><use href="#file"/></svg><div class="t " style="left:256px;top:320.5px;letter-spacing:-0.1px;">Creative Catalyst 10.lrtemplate</div><div class="t gr" style="left:555px;top:320.5px;letter-spacing:-0.146px;">2008-11-07 22:36</div><div class="t gr" style="left:705px;top:320.5px;letter-spacing:-0.004px;">AdobeLightroom.l...</div><div class="t gr" style="left:858px;top:320.5px;width:80px;text-align:right;letter-spacing:-0.633px">2 KB</div><svg class="abs" style="left:231px;top:347px" width="18" height="20" viewBox="0 0 18 20"><use href="#file"/></svg><div class="t " style="left:256px;top:347.5px;letter-spacing:-0.1px;">Creative Catalyst 12.lrtemplate</div><div class="t gr" style="left:555px;top:347.5px;letter-spacing:-0.146px;">2008-11-07 22:40</div><div class="t gr" style="left:705px;top:347.5px;letter-spacing:-0.004px;">AdobeLightroom.l...</div><div class="t gr" style="left:858px;top:347.5px;width:80px;text-align:right;letter-spacing:-0.633px">3 KB</div><svg class="abs" style="left:231px;top:374px" width="18" height="20" viewBox="0 0 18 20"><use href="#file"/></svg><div class="t " style="left:256px;top:374.5px;letter-spacing:-0.1px;">Creative Catalyst 15.lrtemplate</div><div class="t gr" style="left:555px;top:374.5px;letter-spacing:-0.146px;">2008-11-07 22:42</div><div class="t gr" style="left:705px;top:374.5px;letter-spacing:-0.004px;">AdobeLightroom.l...</div><div class="t gr" style="left:858px;top:374.5px;width:80px;text-align:right;letter-spacing:-0.633px">3 KB</div><svg class="abs" style="left:231px;top:401px" width="18" height="20" viewBox="0 0 18 20"><use href="#file"/></svg><div class="t " style="left:256px;top:401.5px;letter-spacing:-0.1px;">Creative Catalyst 19.lrtemplate</div><div class="t gr" style="left:555px;top:401.5px;letter-spacing:-0.146px;">2008-11-07 22:45</div><div class="t gr" style="left:705px;top:401.5px;letter-spacing:-0.004px;">AdobeLightroom.l...</div><div class="t gr" style="left:858px;top:401.5px;width:80px;text-align:right;letter-spacing:-0.633px">3 KB</div><svg class="abs" style="left:231px;top:428px" width="18" height="20" viewBox="0 0 18 20"><use href="#file"/></svg><div class="t " style="left:256px;top:428.5px;letter-spacing:-0.1px;">Creative Catalyst 48.lrtemplate</div><div class="t gr" style="left:555px;top:428.5px;letter-spacing:-0.146px;">2008-11-13 15:41</div><div class="t gr" style="left:705px;top:428.5px;letter-spacing:-0.004px;">AdobeLightroom.l...</div><div class="t gr" style="left:858px;top:428.5px;width:80px;text-align:right;letter-spacing:-0.633px">3 KB</div><svg class="abs" style="left:231px;top:455px" width="18" height="20" viewBox="0 0 18 20"><use href="#file"/></svg><div class="t " style="left:256px;top:455.5px;letter-spacing:-0.017px;">Dark Horse 1.lrtemplate</div><div class="t gr" style="left:555px;top:455.5px;letter-spacing:-0.215px;">2007-09-29 00:51</div><div class="t gr" style="left:705px;top:455.5px;letter-spacing:-0.004px;">AdobeLightroom.l...</div><div class="t gr" style="left:858px;top:455.5px;width:80px;text-align:right;letter-spacing:-0.633px">3 KB</div><svg class="abs" style="left:231px;top:482px" width="18" height="20" viewBox="0 0 18 20"><use href="#file"/></svg><div class="t " style="left:256px;top:482.5px;letter-spacing:0.139px;">Go To.lrtemplate</div><div class="t gr" style="left:555px;top:482.5px;letter-spacing:-0.215px;">2007-10-03 00:36</div><div class="t gr" style="left:705px;top:482.5px;letter-spacing:-0.004px;">AdobeLightroom.l...</div><div class="t gr" style="left:858px;top:482.5px;width:80px;text-align:right;letter-spacing:-0.633px">3 KB</div><svg class="abs" style="left:231px;top:509px" width="18" height="20" viewBox="0 0 18 20"><use href="#file"/></svg><div class="t " style="left:256px;top:509.5px;letter-spacing:-0.075px;">Sepia Chic.lrtemplate</div><div class="t gr" style="left:555px;top:509.5px;letter-spacing:-0.146px;">2008-11-05 12:22</div><div class="t gr" style="left:705px;top:509.5px;letter-spacing:-0.004px;">AdobeLightroom.l...</div><div class="t gr" style="left:858px;top:509.5px;width:80px;text-align:right;letter-spacing:-0.633px">3 KB</div><svg class="abs" style="left:231px;top:536px" width="18" height="20" viewBox="0 0 18 20"><use href="#file"/></svg><div class="t " style="left:256px;top:536.5px;letter-spacing:-0.048px;">Sugar &amp; Spice Sepia.lrtemplate</div><div class="t gr" style="left:555px;top:536.5px;letter-spacing:-0.215px;">2007-09-22 00:56</div><div class="t gr" style="left:705px;top:536.5px;letter-spacing:-0.004px;">AdobeLightroom.l...</div><div class="t gr" style="left:858px;top:536.5px;width:80px;text-align:right;letter-spacing:-0.633px">3 KB</div><svg class="abs" style="left:231px;top:563px" width="18" height="20" viewBox="0 0 18 20"><use href="#pdf"/></svg><div class="t " style="left:256px;top:563.5px;letter-spacing:-0.075px;">Welcome to Wonderland Presets 3.0.pdf</div><div class="t gr" style="left:555px;top:563.5px;letter-spacing:-0.215px;">2008-12-02 19:05</div><div class="t gr" style="left:705px;top:563.5px;letter-spacing:-0.536px;">Foxit Reader PDF ...</div><div class="t gr" style="left:858px;top:563.5px;width:80px;text-align:right;letter-spacing:-0.536px">483 KB</div><div class="t " style="left:25.5px;top:698.5px;letter-spacing:-0.346px;color:#1e395b">Elementy: 16</div><div class="t " style="left:135px;top:698.5px;letter-spacing:-0.351px;color:#1e395b">1 zaznaczony element. 2,52 KB</div><div class="abs" style="left:119px;top:699px;width:1px;height:18px;background:#f0f0f0"></div><div class="abs" style="left:349px;top:699px;width:1px;height:18px;background:#f0f0f0"></div><div class="abs" style="left:951px;top:695px;width:28px;height:27px;background:#cce8ff;border:1px solid #3399ff"></div><svg class="abs" style="left:956px;top:700px" width="18" height="17" viewBox="0 0 18 17"><use href="#vdet"/></svg><svg class="abs" style="left:983px;top:700px" width="16" height="14" viewBox="0 0 16 14"><use href="#vthumb"/></svg></div></div>
</body></html>
